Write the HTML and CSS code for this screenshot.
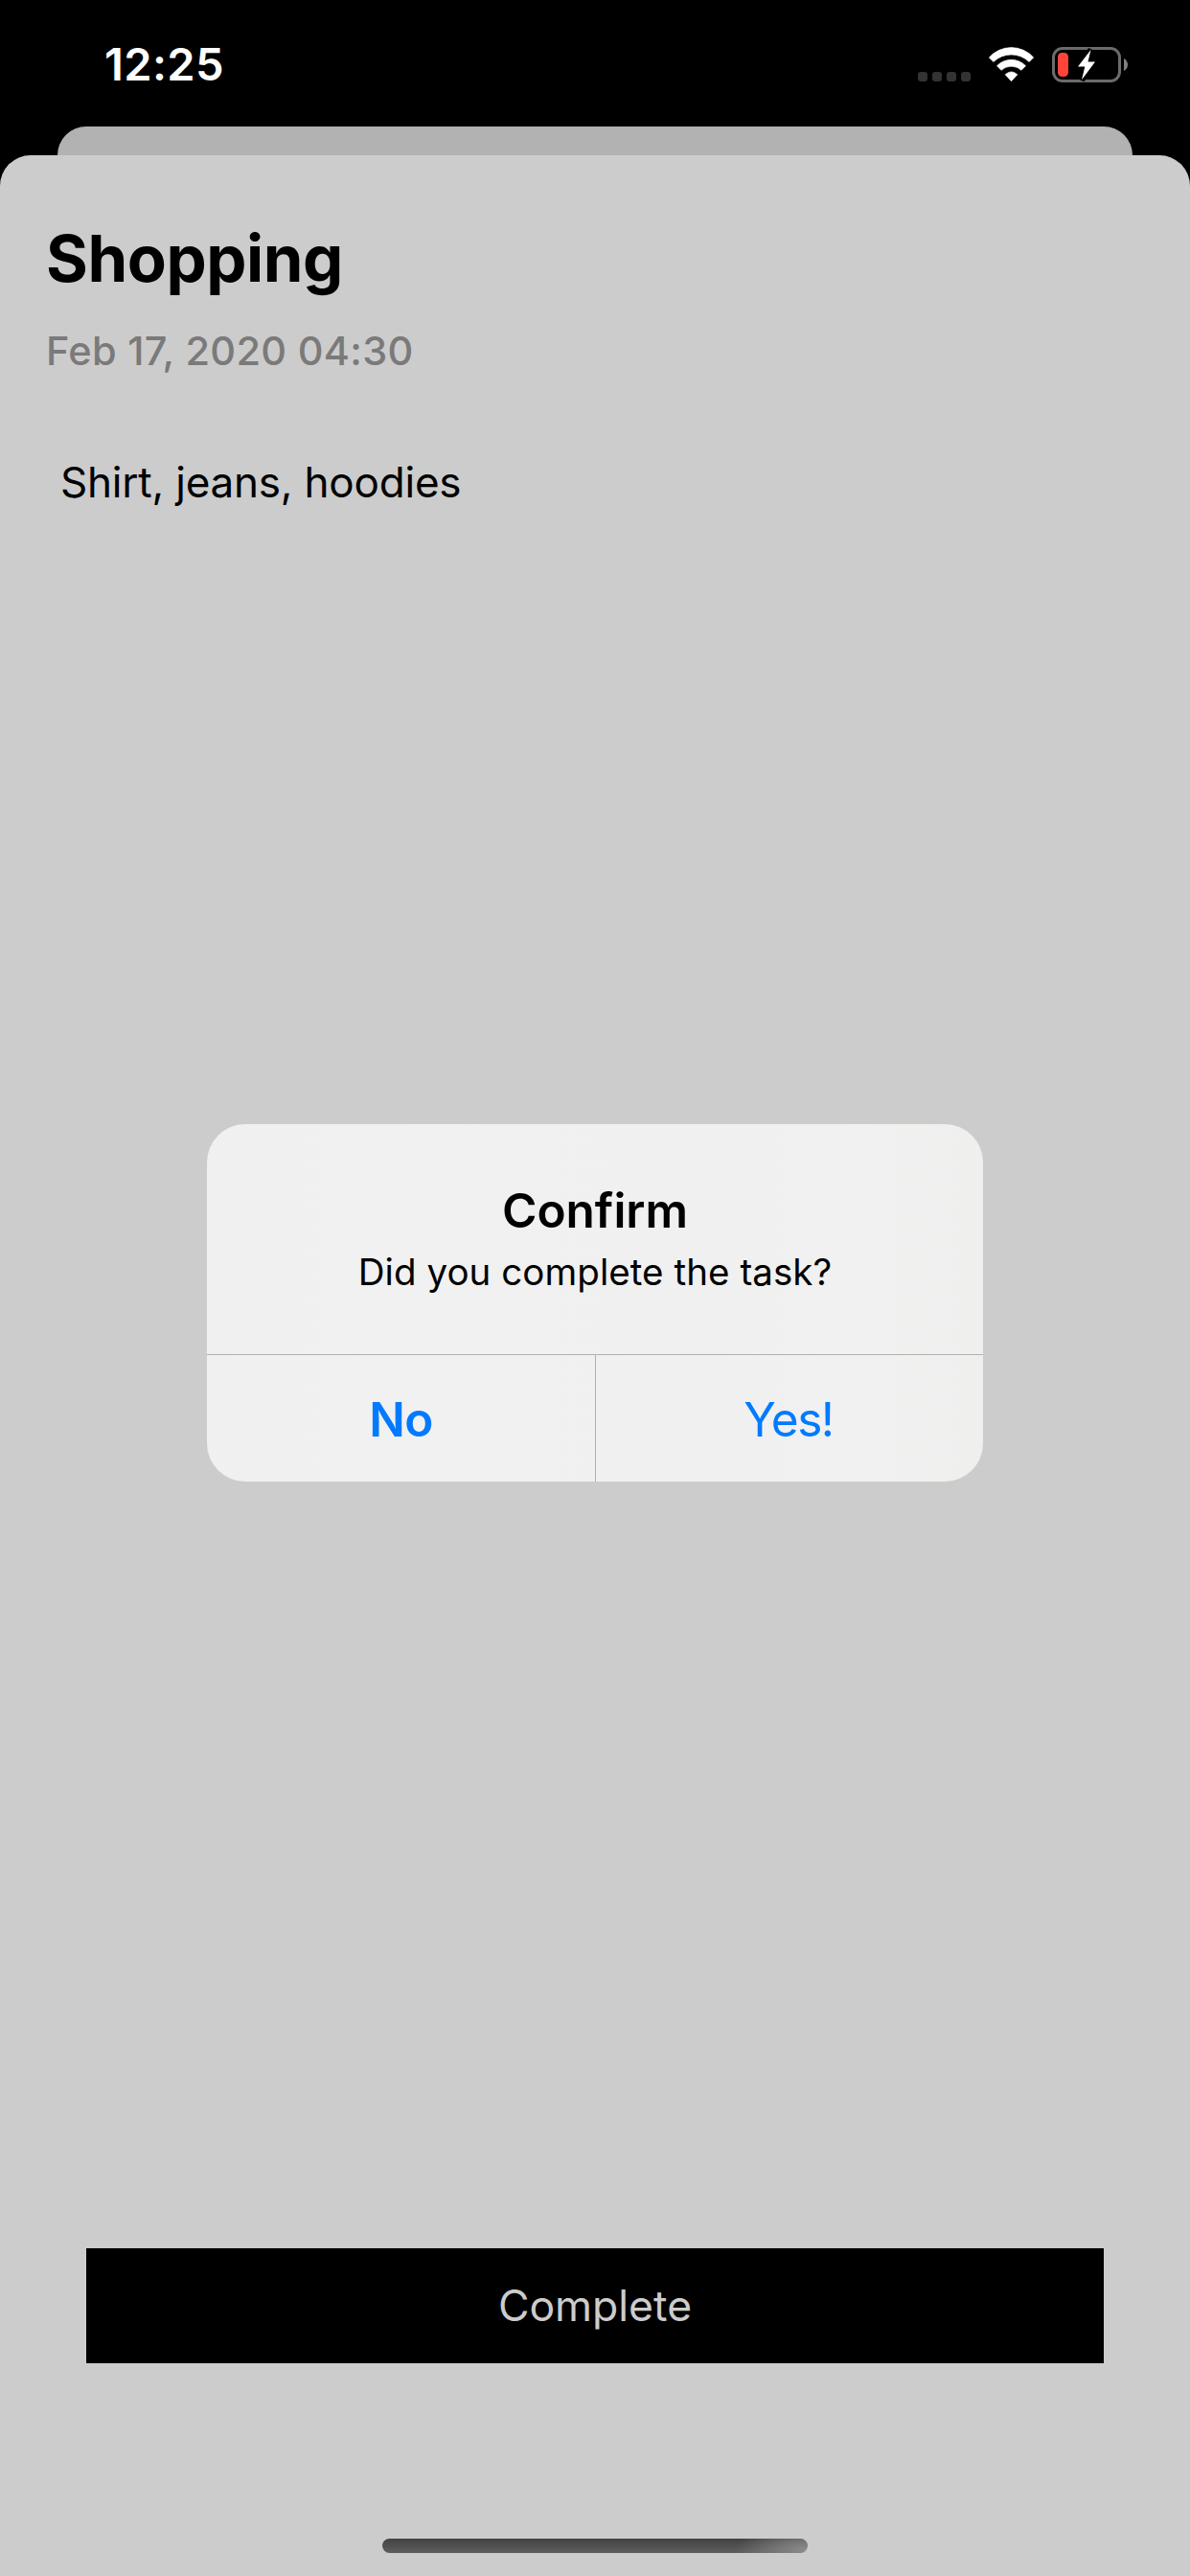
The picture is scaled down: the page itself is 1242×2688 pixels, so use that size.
FILE: index.html
```
<!DOCTYPE html>
<html lang="en">
<head>
<meta charset="utf-8">
<title>Shopping</title>
<link rel="stylesheet" href="styles.css">
</head>
<body>
<div class="screen">
  <header class="status-bar">
    <time class="clock">12:25</time>
    <div class="status-icons">
      <span class="signal"><i class="dot"></i><i class="dot"></i><i class="dot"></i><i class="dot"></i></span>
      <svg class="wifi" width="49" height="37" viewBox="0 0 147 111" aria-hidden="true">
        <g fill="#fff" stroke="#fff" stroke-width="2" stroke-linejoin="round">
          <path d="M4 33A93 93 0 0 1 143 33L129.500 46.500A81 81 0 0 0 17.500 46.500Z"/>
          <path d="M28.500 59A63 63 0 0 1 118.500 59L105 73A46 46 0 0 0 42 73Z"/>
          <path d="M54.500 86.500Q73.500 69 92.500 86.500L73.500 107Z"/>
        </g>
      </svg>
      <svg class="battery" width="79" height="37" viewBox="0 0 79 37" aria-hidden="true">
        <rect x="1.500" y="1.500" width="69" height="34" rx="9.500" fill="none" stroke="#6b6b6b" stroke-width="3"/>
        <path d="M75 12Q79 14.500 79 18.500T75 25Z" fill="#808080"/>
        <rect x="6" y="6" width="11" height="25" rx="4.500" fill="#ff453a"/>
        <path d="M40.500 2.700L27 20.500H34.500L31 34.500L45 15.500H37.300Z" fill="#000" stroke="#000" stroke-width="6"/>
        <path d="M40.500 2.900L27 20.500H34.300L31 34.300L45 15.500H37.500Z" fill="#fff"/>
      </svg>
    </div>
  </header>
  <div class="back-sheet"></div>
  <main class="sheet">
    <h1 class="title">Shopping</h1>
    <p class="date">Feb 17, 2020 04:30</p>
    <p class="note">Shirt, jeans, hoodies</p>
    <button class="complete">Complete</button>
    <div class="home-indicator"></div>
  </main>
  <div class="overlay">
    <section class="alert" role="alertdialog">
      <div class="alert-body">
        <h2 class="alert-title">Confirm</h2>
        <p class="alert-message">Did you complete the task?</p>
      </div>
      <div class="alert-actions">
        <button class="action action-no">No</button>
        <button class="action action-yes">Yes!</button>
      </div>
    </section>
  </div>
</div>
</body>
</html>
```
FILE: styles.css
```
* { box-sizing: border-box; margin: 0; padding: 0; }

body {
  background: #000;
  font-family: Inter, "Liberation Sans", sans-serif;
  color: #000;
}

button { border: 0; background: none; font-family: inherit; }

.screen {
  position: relative;
  display: flex;
  flex-direction: column;
  width: 1242px;
  height: 2688px;
  overflow: hidden;
  background: #000;
}

.status-bar {
  display: flex;
  justify-content: space-between;
  align-items: flex-start;
  height: 132px;
  padding: 37px 65px 0 109px;
}

.clock {
  font-size: 47px;
  font-weight: 600;
  line-height: 60px;
  letter-spacing: 0.39px;
  color: #fff;
}

.status-icons {
  display: flex;
  align-items: flex-end;
  gap: 18px;
  padding-top: 12px;
}

.signal { display: flex; gap: 5px; padding-bottom: 1px; }

.dot { width: 10px; height: 10px; border-radius: 3px; background: #333; }

.wifi, .battery { display: block; }

.back-sheet {
  height: 30px;
  margin: 0 60px;
  border-radius: 30px 30px 0 0;
  background: #b2b2b2;
}

.sheet {
  display: flex;
  flex: 1;
  flex-direction: column;
  padding: 68px 90px 24px 48px;
  border-radius: 32px 32px 0 0;
  background: #ccc;
}

.title {
  font-size: 67px;
  font-weight: 700;
  line-height: 80px;
  letter-spacing: -0.43px;
}

.date {
  margin-top: 31px;
  font-size: 41.5px;
  font-weight: 500;
  line-height: 50px;
  letter-spacing: 0.3px;
  color: #7a7a7a;
}

.note {
  margin: 86px 0 0 15px;
  font-size: 44px;
  line-height: 52px;
  letter-spacing: -0.2px;
}

.complete {
  height: 120px;
  margin: auto 0 0 42px;
  background: #000;
  color: #ccc;
  font-size: 44.5px;
  line-height: 120px;
}

.home-indicator {
  width: 444px;
  height: 15px;
  margin: 183px 0 0 351px;
  border-radius: 8px;
  background:
    radial-gradient(ellipse 75px 28px at 100% 80%, #8c8c8c 0%, rgba(140, 140, 140, 0) 100%),
    linear-gradient(#424242, #5e5e5e);
}

.overlay {
  position: absolute;
  inset: 0;
  display: flex;
  justify-content: center;
  align-items: flex-start;
  padding-top: 1173px;
}

.alert {
  width: 810px;
  height: 373px;
  overflow: hidden;
  border-radius: 40px;
  background: linear-gradient(90deg, #f0f0f0, #f1f1f1 30%, #f0f0f0 65%, #f0f1f0 85%, #eff0ee);
  text-align: center;
}

.alert-body {
  height: 241px;
  padding-top: 60px;
  border-bottom: 1px solid #b0b2b1;
}

.alert-title {
  font-size: 49.5px;
  font-weight: 600;
  line-height: 60px;
}

.alert-message {
  margin-top: 11px;
  font-size: 38.5px;
  line-height: 46px;
  letter-spacing: 0.06px;
}

.alert-actions { display: flex; height: 132px; }

.action {
  display: flex;
  flex: 1;
  justify-content: center;
  padding-top: 37px;
  color: #007aff;
  font-size: 49.5px;
  line-height: 60px;
}

.action-no {
  flex: 0 0 406px;
  border-right: 1px solid #b0b2b1;
  font-weight: 600;
  letter-spacing: -0.5px;
}

.action-yes { padding-right: 2px; letter-spacing: -1.4px; }
```
